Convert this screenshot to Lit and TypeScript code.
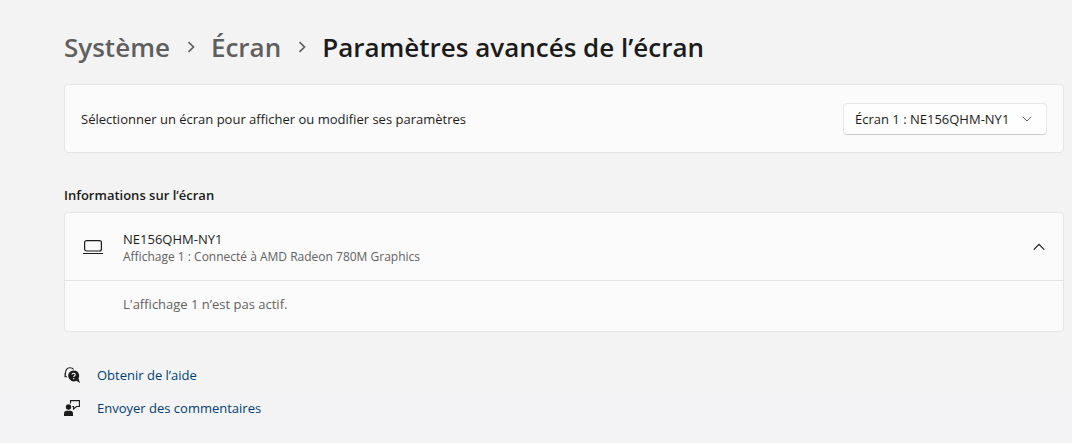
import { LitElement, html, css, nothing } from "lit";
import { customElement, state } from "lit/decorators.js";

@customElement("app-root")
export class AppRoot extends LitElement {
  static styles = css`
    :host {
      display: block;
      box-sizing: border-box;
      min-height: 100vh;
      padding: 27px 8px 16px 64px;
      background: linear-gradient(#f3f3f3 60%, #f3f3f5);
      color: #1b1b1b;
      font-family: "Open Sans", "Noto Sans", sans-serif;
      font-size: 13px;
      line-height: 20px;
    }
    svg {
      display: block;
      flex: none;
      fill: none;
      stroke: currentColor;
    }
    .crumbs {
      display: flex;
      align-items: center;
      gap: 16px;
      margin: 0 0 17px;
      padding: 0;
      list-style: none;
      font-size: 26px;
      line-height: 40px;
      font-weight: 600;
    }
    .crumbs li {
      display: flex;
      align-items: center;
      gap: 16px;
    }
    .crumbs a {
      color: #5f5f5f;
      text-decoration: none;
    }
    .crumbs svg {
      color: #5f5f5f;
    }
    h1 {
      margin: 0;
      font: inherit;
    }
    .card {
      border: 1px solid #e5e5e5;
      border-radius: 4px;
      background: #fbfbfb;
    }
    .row {
      display: flex;
      align-items: center;
      justify-content: space-between;
      padding: 18px 16px 17px;
    }
    .picker {
      display: grid;
      align-items: center;
    }
    .picker select,
    .picker svg {
      grid-area: 1 / 1;
    }
    .picker svg {
      justify-self: end;
      margin-right: 15px;
      color: #5f5f5f;
      pointer-events: none;
    }
    select {
      appearance: none;
      height: 32px;
      margin: 0;
      padding: 0 36px 0 11px;
      border: 1px solid #e7e7e7;
      border-bottom-color: #cccccc;
      border-radius: 4px;
      background: #fefefe;
      color: inherit;
      font: inherit;
    }
    h2 {
      margin: 32px 0 7px;
      font-size: 13px;
      line-height: 20px;
      font-weight: 600;
    }
    .expander {
      display: flex;
      align-items: center;
      width: 100%;
      padding: 16px 18px;
      border: 0;
      background: none;
      color: inherit;
      font: inherit;
      text-align: left;
    }
    .labels {
      flex: 1;
      margin-left: 20px;
    }
    .name,
    .detail {
      display: block;
    }
    .detail {
      color: #616161;
      font-size: 12px;
      line-height: 15px;
    }
    .body {
      margin: 0;
      padding: 13px 16px 17px 58px;
      border-top: 1px solid #e5e5e5;
      color: #616161;
    }
    .links {
      display: flex;
      flex-direction: column;
      align-items: flex-start;
      gap: 13px;
      margin-top: 33px;
    }
    .link {
      display: flex;
      align-items: center;
      gap: 17px;
      color: #003e73;
      text-decoration: none;
    }
    .link svg {
      color: #1b1b1b;
    }
  `;

  @state() private open = true;

  private separator() {
    return html`<svg width="9" height="14" viewBox="0 0 9 14" stroke-width="1.7" aria-hidden="true">
      <path d="M2.5 2.2 7.5 7 2.5 11.8" />
    </svg>`;
  }

  render() {
    return html`
      <nav aria-label="Fil d’Ariane">
        <ol class="crumbs">
          <li><a href="#systeme">Système</a>${this.separator()}</li>
          <li><a href="#ecran">Écran</a>${this.separator()}</li>
          <li><h1>Paramètres avancés de l’écran</h1></li>
        </ol>
      </nav>

      <section class="card row">
        <label for="display">Sélectionner un écran pour afficher ou modifier ses paramètres</label>
        <div class="picker">
          <select id="display">
            <option>Écran 1 : NE156QHM-NY1</option>
          </select>
          <svg width="10" height="6" viewBox="0 0 10 6" aria-hidden="true">
            <path d="M.8.8 5 5 9.2.8" />
          </svg>
        </div>
      </section>

      <h2>Informations sur l’écran</h2>
      <section class="card">
        <button
          class="expander"
          aria-expanded=${this.open ? "true" : "false"}
          @click=${() => (this.open = !this.open)}
        >
          <svg width="20" height="16" viewBox="0 0 20 16" aria-hidden="true">
            <rect x="1.6" y="1.6" width="16.8" height="10.4" rx="2" stroke-width="1.2" />
            <path d="M0 14.5H20" />
          </svg>
          <span class="labels">
            <span class="name">NE156QHM-NY1</span>
            <span class="detail">Affichage 1 : Connecté à AMD Radeon 780M Graphics</span>
          </span>
          <svg width="12" height="8" viewBox="0 0 12 8" stroke-width="1.2" aria-hidden="true">
            <path d=${this.open ? "M.8 6.6 6 1.4 11.2 6.6" : "M.8 1.4 6 6.6 11.2 1.4"} />
          </svg>
        </button>
        ${this.open ? html`<p class="body">L'affichage 1 n’est pas actif.</p>` : nothing}
      </section>

      <div class="links">
        <a class="link" href="#aide">
          <svg width="16" height="16" viewBox="0 0 16 16" aria-hidden="true">
            <path d="M1.4 7C1.4 3.2 3 .7 5.8.7 7.6.7 8.8 1.3 9.6 2.3" stroke-width="1.1" />
            <path d="M1.2 6.2V9.6H2.8" stroke-width="1.3" />
            <path d="M9.6 3.4a5.5 5.5 0 1 0 2.8 10.3L16 16 14.5 11.5A5.5 5.5 0 0 0 9.6 3.4Z" fill="currentColor" stroke="none" />
            <path d="M8 7.5C8.1 5.9 11.2 5.900 11.200 7.700 11.200 8.900 9.700 8.900 9.700 10.100M9.700 11V12.200" stroke="#fff" stroke-width="1.1" />
          </svg>
          Obtenir de l’aide
        </a>
        <a class="link" href="#commentaires">
          <svg width="16" height="16" viewBox="0 0 16 16" aria-hidden="true">
            <circle cx="4.5" cy="7" r="2.7" fill="currentColor" stroke="none" />
            <path d="M0 16V13.5C0 11.8 1 10.7 2.6 10.7H6.5C8 10.7 9 11.8 9 13.5V16Z" fill="currentColor" stroke="none" />
            <path d="M6.5 3.5V.6H15.4V6.5H12.5L9.5 9V6.5H8.3" stroke-width="1.1" />
          </svg>
          Envoyer des commentaires
        </a>
      </div>
    `;
  }
}
